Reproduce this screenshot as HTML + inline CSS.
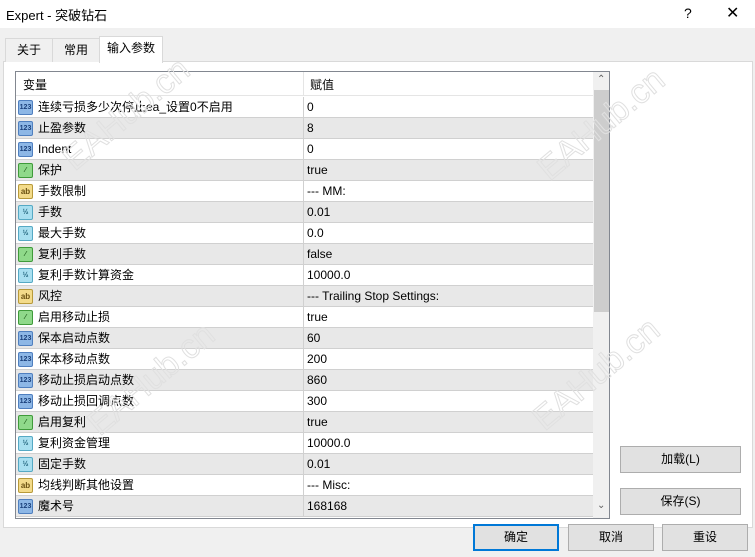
<!DOCTYPE html>
<html><head><meta charset="utf-8"><style>
*{margin:0;padding:0;box-sizing:border-box}
body{width:755px;height:557px;background:#f0f0f0;font-family:"Liberation Sans","Noto Sans CJK SC",sans-serif;font-size:12px;color:#000;position:relative;overflow:hidden}
.abs{position:absolute}
#title{left:0;top:0;width:755px;height:28px;background:#fff}
#title .t{left:6px;top:5px;font-size:13px}
.tab{top:38px;height:24px;border:1px solid #d9d9d9;border-bottom:none;background:#f0f0f0;text-align:center;line-height:22px}
#panel{left:3px;top:61px;width:750px;height:467px;background:#fff;border:1px solid #d9d9d9}
#list{left:15px;top:71px;width:595px;height:448px;border:1px solid #828790;background:#fff;overflow:hidden}
.row{position:absolute;left:0;width:578px;height:21px;border-bottom:1px solid #d0d0d0;line-height:21px}
.row.g{background:#e8e8e8}
.row .n{position:absolute;left:22px;top:0}
.row .v{position:absolute;left:291px;top:0}
.row .d{position:absolute;left:287px;top:0;width:1px;height:21px;background:#d0d0d0}
.ic{position:absolute;left:2px;top:3px;width:15px;height:15px;border-radius:2px;font-size:7px;line-height:14px;text-align:center;font-weight:bold}
.i1{background:#8db7e6;border:1px solid #4f7fbf;color:#1a3f7a}
.i2{background:#f3db8a;border:1px solid #b89a3a;color:#6a5010;font-size:8px}
.i3{background:#a8dff0;border:1px solid #55a9c4;color:#1b5e77}
.i4{background:#8fd98a;border:1px solid #3f9a3a;color:#1f5e1b}
.btn{height:27px;background:#e1e1e1;border:1px solid #adadad;text-align:center;line-height:25px}
.wm{position:absolute;font-size:34px;color:transparent;-webkit-text-stroke:1px #e0e0e0;transform:rotate(-40deg);font-family:"Liberation Sans",sans-serif;white-space:nowrap}
</style></head><body>
<div id="title" class="abs"><div class="t abs">Expert - 突破钻石</div>
<div class="abs" style="left:684px;top:5px;font-size:14px">?</div>
<div class="abs" style="left:726px;top:3px;font-size:16px;font-weight:100">✕</div></div>
<div id="panel" class="abs"></div>
<div class="tab abs" style="left:5px;width:48px">关于</div>
<div class="tab abs" style="left:52px;width:48px">常用</div>
<div class="tab abs" style="left:99px;top:36px;height:27px;width:64px;background:#fff;border-color:#d9d9d9">输入参数</div>
<div id="list" class="abs">
<div class="abs" style="left:0;top:0;width:578px;height:24px;border-bottom:1px solid #e5e5e5"><span class="abs" style="left:7px;top:4px">变量</span><span class="abs" style="left:287px;top:0;width:1px;height:24px;background:#e5e5e5"></span><span class="abs" style="left:294px;top:4px">赋值</span></div>
<div id="rows"></div>
<div class="abs" style="left:577px;top:0;width:17px;height:446px;background:#f0f0f0"></div>
<div class="abs" style="left:578px;top:18px;width:15px;height:222px;background:#cdcdcd"></div>
<div class="abs" style="left:581px;top:2px;font-size:10px;color:#606060">⌃</div>
<div class="abs" style="left:581px;top:428px;font-size:10px;color:#606060">⌄</div>
</div>
<div class="btn abs" style="left:620px;top:446px;width:121px">加载(L)</div>
<div class="btn abs" style="left:620px;top:488px;width:121px">保存(S)</div>
<div class="btn abs" style="left:473px;top:524px;width:86px;border:2px solid #0078d7;line-height:23px">确定</div>
<div class="btn abs" style="left:568px;top:524px;width:86px">取消</div>
<div class="btn abs" style="left:662px;top:524px;width:86px">重设</div>
<div class="wm" style="left:50px;top:95px">EAHub.cn</div>
<div class="wm" style="left:525px;top:105px">EAHub.cn</div>
<div class="wm" style="left:75px;top:360px">EAHub.cn</div>
<div class="wm" style="left:520px;top:355px">EAHub.cn</div>
<script>
var d=[["1","连续亏损多少次停止ea_设置0不启用","0"],["1","止盈参数","8"],["1","Indent","0"],["4","保护","true"],["2","手数限制","--- MM:"],["3","手数","0.01"],["3","最大手数","0.0"],["4","复利手数","false"],["3","复利手数计算资金","10000.0"],["2","风控","--- Trailing Stop Settings:"],["4","启用移动止损","true"],["1","保本启动点数","60"],["1","保本移动点数","200"],["1","移动止损启动点数","860"],["1","移动止损回调点数","300"],["4","启用复利","true"],["3","复利资金管理","10000.0"],["3","固定手数","0.01"],["2","均线判断其他设置","--- Misc:"],["1","魔术号","168168"]];
var t={"1":"123","2":"ab","3":"½","4":"⁄"};var h="";
d.forEach(function(r,i){h+='<div class="row'+(i%2?' g':'')+'" style="top:'+(25+21*i)+'px"><div class="ic i'+r[0]+'">'+t[r[0]]+'</div><span class="n">'+r[1]+'</span><span class="d"></span><span class="v">'+r[2]+'</span></div>';});
document.getElementById("rows").innerHTML=h;
</script>
</body></html>
